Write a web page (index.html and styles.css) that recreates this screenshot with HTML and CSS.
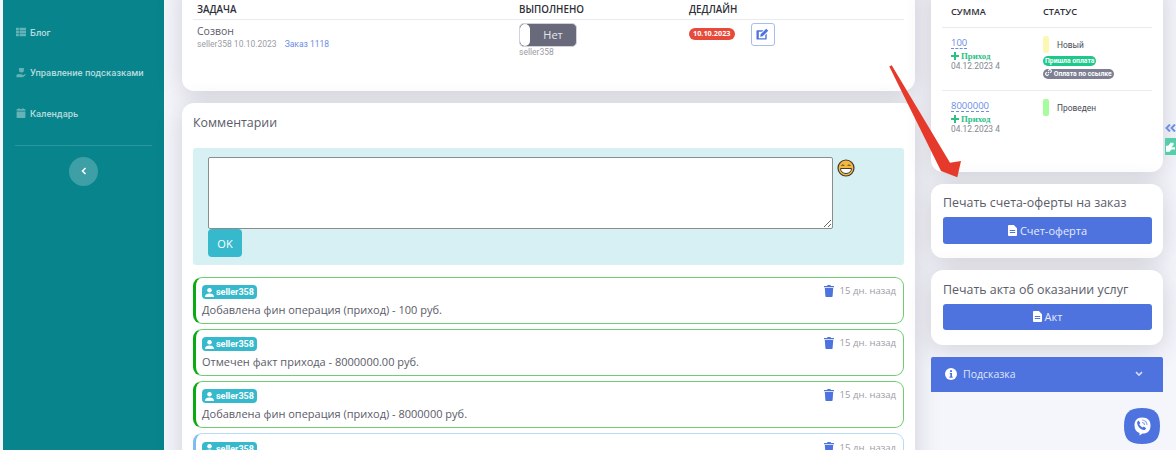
FILE: index.html
```html
<!DOCTYPE html>
<html lang="en">
<head>
    <meta charset="UTF-8">
    <meta name="viewport" content="width=device-width, initial-scale=1.0">
    <title>Заказ 1118</title>
    <link rel="stylesheet" href="styles.css">
</head>
<body>
    <div class="page">
        <aside class="sidebar">
            <a class="nav-item">
                <svg class="nav-icon" viewBox="0 0 12 12"><path d="M0 1h3.400v2.800H0zM4.200 1H12v2.800H4.200zM0 4.600h3.400v2.800H0zM4.200 4.600H12v2.800H4.200zM0 8.200h3.400V11H0zM4.200 8.200H12V11H4.200z"/></svg>
                Блог
            </a>
            <a class="nav-item">
                <svg class="nav-icon" viewBox="0 0 12 12"><path d="M3.500 0h6v2.500a3 3 0 0 1-6 0zM.5 8.500c1.500-1.500 3-1.500 4-1h2.300c1 0 1 1.300 0 1.300H5.200h2.600L10.500 7.500c.9-.4 1.500.5.8 1.100L8 11H.5z"/></svg>
                Управление подсказками
            </a>
            <a class="nav-item">
                <svg class="nav-icon" viewBox="0 0 12 12"><path d="M3 0h1.200v1.300h3.600V0H9v1.300h1.500a.8.800 0 0 1 .8.800v1.300H.7V2.100a.8.800 0 0 1 .8-.8H3zM.7 4.200h10.600v7a.8.800 0 0 1-.8.800h-9a.8.800 0 0 1-.8-.8z"/></svg>
                Календарь
            </a>
            <hr class="nav-line">
            <button class="collapse-btn">
                <svg viewBox="0 0 8 10" width="6" height="8"><path d="M6 1 2 5l4 4" fill="none" stroke="#fff" stroke-width="2"/></svg>
            </button>
        </aside>

        <main class="content">
            <section class="card task-card">
                <table class="task-table">
                    <thead>
                        <tr>
                            <th class="col-task">ЗАДАЧА</th>
                            <th class="col-done">ВЫПОЛНЕНО</th>
                            <th>ДЕДЛАЙН</th>
                        </tr>
                    </thead>
                    <tbody>
                        <tr>
                            <td>
                                <div class="task-name">Созвон</div>
                                <div class="task-meta">seller358 10.10.2023 <a class="task-link">Заказ 1118</a></div>
                            </td>
                            <td>
                                <div class="toggle"><span class="toggle-knob"></span><span class="toggle-text">Нет</span></div>
                                <div class="task-meta">seller358</div>
                            </td>
                            <td>
                                <div class="deadline">
                                    <span class="date-badge">10.10.2023</span>
                                    <button class="edit-btn">
                                        <svg viewBox="0 0 14 14" width="13" height="13"><path d="M1.500 2.500H8L6.500 4H3v7h7V7.500L11.500 6v5.500a1 1 0 0 1-1 1h-9a1 1 0 0 1-1-1v-8a1 1 0 0 1 1-1zM11 .8l2.200 2.200-6 6-2.700.5.500-2.700z" fill="#4e73df"/></svg>
                                    </button>
                                </div>
                            </td>
                        </tr>
                    </tbody>
                </table>
            </section>

            <section class="card comments-card">
                <h3 class="comments-title">Комментарии</h3>
                <div class="comment-form">
                    <div class="comment-row">
                        <textarea class="comment-input"></textarea>
                        <svg class="smile" viewBox="0 0 18 18" width="18" height="18">
                            <circle cx="9" cy="9" r="8" fill="#f6b73c" stroke="#3b3b3b" stroke-width="1.200"/>
                            <path d="M3.500 9.500h11c0 3-2.500 5-5.500 5s-5.500-2-5.500-5z" fill="#fff" stroke="#3b3b3b"/>
                            <path d="M4.500 7c.5-1.500 2-1.500 2.800 0M10.700 7c.5-1.500 2-1.500 2.800 0" fill="none" stroke="#3b3b3b"/>
                        </svg>
                    </div>
                    <button class="ok-btn">OK</button>
                </div>

                <div class="comment-list">
                    <div class="comment comment-green">
                        <div class="comment-top">
                            <span class="user-badge">
                                <svg viewBox="0 0 10 10" width="9" height="9"><circle cx="5" cy="2.600" r="2.500" fill="#fff"/><path d="M0 10c0-3 2-4 5-4s5 1 5 4z" fill="#fff"/></svg>
                                seller358
                            </span>
                            <span class="comment-age">
                                <svg class="trash" viewBox="0 0 10 12" width="10" height="12"><path d="M3.500 0h3l.4 1H10v1.300H0V1h3.100zM.8 3h8.400l-.6 8.200a.8.800 0 0 1-.8.800H2.200a.8.800 0 0 1-.8-.8z" fill="#4e73df"/></svg>
                                15 дн. назад
                            </span>
                        </div>
                        <div class="comment-text">Добавлена фин операция (приход) - 100 руб.</div>
                    </div>

                    <div class="comment comment-green">
                        <div class="comment-top">
                            <span class="user-badge">
                                <svg viewBox="0 0 10 10" width="9" height="9"><circle cx="5" cy="2.600" r="2.500" fill="#fff"/><path d="M0 10c0-3 2-4 5-4s5 1 5 4z" fill="#fff"/></svg>
                                seller358
                            </span>
                            <span class="comment-age">
                                <svg class="trash" viewBox="0 0 10 12" width="10" height="12"><path d="M3.500 0h3l.4 1H10v1.300H0V1h3.100zM.8 3h8.400l-.6 8.200a.8.800 0 0 1-.8.800H2.200a.8.800 0 0 1-.8-.8z" fill="#4e73df"/></svg>
                                15 дн. назад
                            </span>
                        </div>
                        <div class="comment-text">Отмечен факт прихода - 8000000.00 руб.</div>
                    </div>

                    <div class="comment comment-green">
                        <div class="comment-top">
                            <span class="user-badge">
                                <svg viewBox="0 0 10 10" width="9" height="9"><circle cx="5" cy="2.600" r="2.500" fill="#fff"/><path d="M0 10c0-3 2-4 5-4s5 1 5 4z" fill="#fff"/></svg>
                                seller358
                            </span>
                            <span class="comment-age">
                                <svg class="trash" viewBox="0 0 10 12" width="10" height="12"><path d="M3.500 0h3l.4 1H10v1.300H0V1h3.100zM.8 3h8.400l-.6 8.200a.8.800 0 0 1-.8.800H2.200a.8.800 0 0 1-.8-.8z" fill="#4e73df"/></svg>
                                15 дн. назад
                            </span>
                        </div>
                        <div class="comment-text">Добавлена фин операция (приход) - 8000000 руб.</div>
                    </div>

                    <div class="comment comment-blue">
                        <div class="comment-top">
                            <span class="user-badge">
                                <svg viewBox="0 0 10 10" width="9" height="9"><circle cx="5" cy="2.600" r="2.500" fill="#fff"/><path d="M0 10c0-3 2-4 5-4s5 1 5 4z" fill="#fff"/></svg>
                                seller358
                            </span>
                            <span class="comment-age">
                                <svg class="trash" viewBox="0 0 10 12" width="10" height="12"><path d="M3.500 0h3l.4 1H10v1.300H0V1h3.100zM.8 3h8.400l-.6 8.200a.8.800 0 0 1-.8.800H2.200a.8.800 0 0 1-.8-.8z" fill="#4e73df"/></svg>
                                15 дн. назад
                            </span>
                        </div>
                    </div>
                </div>
            </section>
        </main>

        <div class="right-col">
            <section class="card pay-card">
                <div class="pay-grid pay-head">
                    <div>СУММА</div>
                    <div>СТАТУС</div>
                </div>
                <div class="pay-grid pay-row">
                    <div>
                        <a class="pay-sum">100</a>
                        <div class="pay-type">
                            <svg viewBox="0 0 8 8" width="8" height="8"><path d="M3 0h2v3h3v2H5v3H3V5H0V3h3z" fill="#2cc084"/></svg>
                            Приход
                        </div>
                        <div class="pay-date">04.12.2023 4</div>
                    </div>
                    <div>
                        <div class="status"><span class="status-bar bar-yellow"></span>Новый</div>
                        <span class="pill pill-green">Пришла оплата</span>
                        <span class="pill pill-gray">
                            <svg viewBox="0 0 10 10" width="7" height="7"><path d="M6 4 4 6M4.500 2.500l1-1a2 2 0 0 1 3 3l-1 1M5.500 7.500l-1 1a2 2 0 0 1-3-3l1-1" fill="none" stroke="#fff" stroke-width="1.500"/></svg>
                            Оплата по ссылке
                        </span>
                    </div>
                </div>
                <div class="pay-grid pay-row pay-row-last">
                    <div>
                        <a class="pay-sum">8000000</a>
                        <div class="pay-type">
                            <svg viewBox="0 0 8 8" width="8" height="8"><path d="M3 0h2v3h3v2H5v3H3V5H0V3h3z" fill="#2cc084"/></svg>
                            Приход
                        </div>
                        <div class="pay-date">04.12.2023 4</div>
                    </div>
                    <div>
                        <div class="status"><span class="status-bar bar-green"></span>Проведен</div>
                    </div>
                </div>
            </section>

            <section class="card print-card">
                <h4 class="print-title">Печать счета-оферты на заказ</h4>
                <button class="print-btn">
                    <svg viewBox="0 0 10 12" width="9" height="11"><path d="M1 0h5.500L10 3.500V11a1 1 0 0 1-1 1H1a1 1 0 0 1-1-1V1a1 1 0 0 1 1-1zM2 5.500v1h6v-1zm0 2.200v1h6v-1z" fill="#fff" fill-rule="evenodd"/></svg>
                    Счет-оферта
                </button>
            </section>

            <section class="card print-card">
                <h4 class="print-title">Печать акта об оказании услуг</h4>
                <button class="print-btn">
                    <svg viewBox="0 0 10 12" width="9" height="11"><path d="M1 0h5.500L10 3.500V11a1 1 0 0 1-1 1H1a1 1 0 0 1-1-1V1a1 1 0 0 1 1-1zM2 5.500v1h6v-1zm0 2.200v1h6v-1z" fill="#fff" fill-rule="evenodd"/></svg>
                    Акт
                </button>
            </section>

            <div class="hint-bar">
                <svg viewBox="0 0 12 12" width="12" height="12"><circle cx="6" cy="6" r="6" fill="#fff"/><path d="M5 2.300h2v1.800H5zM4.700 5h2.300v3.600h.6v1.100H4.500V8.600h.8V6.100h-.6z" fill="#4e73df"/></svg>
                <span class="hint-text">Подсказка</span>
                <svg class="hint-chevron" viewBox="0 0 10 8" width="8" height="6"><path d="M1 1.500 5 5.500l4-4" fill="none" stroke="#d5dcf6" stroke-width="2"/></svg>
            </div>
        </div>

        <div class="side-tools">
            <svg viewBox="0 0 11 8" width="11" height="8"><path d="M5 .5 1.500 4 5 7.500M10 .5 6.500 4 10 7.500" fill="none" stroke="#6f8fe6" stroke-width="2"/></svg>
            <span class="tool-green">
                <svg viewBox="0 0 12 14" width="9" height="11"><path d="M0 6h3l3-4h4v3l-3 3h5v3H7l-2 3H0z" fill="#fff"/></svg>
            </span>
        </div>

        <svg class="red-arrow" viewBox="0 0 80 115" width="80" height="115">
            <path d="M5.300 1.500 7.700.3 66 97.700 77 96 73.300 112.300 57 106z" fill="#e53a2b"/>
        </svg>

        <div class="chat-btn">
            <svg viewBox="0 0 36 36" width="36" height="36">
                <path d="M18 0c13 0 18 5 18 18s-5 18-18 18S0 31 0 18 5 0 18 0z" fill="#4e73df"/>
                <path d="M18 9.500c6 0 8.500 3 8.500 8 0 5.500-3 8-7.500 8h-.5l-3 2v-2.400c-3-1-5-3.600-5-7.600 0-5 2.500-8 7.500-8z" fill="#fff"/>
                <path d="M14.500 12.500l1.800 2.500-1 1.300c.7 1.400 1.700 2.400 3.200 3.200l1.300-1 2.400 1.800-1.300 1.800c-4.200 0-7.800-3.700-7.800-8.200z" fill="#4e73df"/>
                <path d="M18 12a5 5 0 0 1 5 5M18 14.500a2.500 2.500 0 0 1 2.500 2.500" fill="none" stroke="#8fa6e8" stroke-width="1.100"/>
            </svg>
        </div>
    </div>
</body>
</html>
```

FILE: styles.css
```css
* {
    box-sizing: border-box;
}
html, body {
    margin: 0;
    height: 100%;
    overflow: hidden;
}
body {
    background-color: #f5f6fc;
    color: #5a5c69;
    font-family: "Open Sans", "Noto Sans", sans-serif;
    font-size: 11px;
}
.page {
    position: relative;
    display: flex;
    height: 450px;
    padding-left: 3px;
    overflow: hidden;
}

/* sidebar */
.sidebar {
    width: 161px;
    flex-shrink: 0;
    height: 450px;
    background-color: #07848c;
    padding: 12px 13px 0;
    color: #b5dadc;
}
.nav-item {
    display: flex;
    align-items: center;
    gap: 4px;
    height: 40.500px;
    font-family: Roboto, sans-serif;
    font-size: 9.400px;
    font-weight: 500;
    white-space: nowrap;
}
.nav-icon {
    width: 10px;
    height: 10px;
    fill: #65b2b7;
    flex-shrink: 0;
}
.nav-line {
    border: none;
    border-top: 1px solid #2b969d;
    margin: 11px -1px 0;
}
.collapse-btn {
    display: flex;
    align-items: center;
    justify-content: center;
    width: 29px;
    height: 29px;
    margin: 11px auto 0;
    border: none;
    border-radius: 50%;
    background-color: #3f9fa6;
}

/* main column */
.content {
    width: 733px;
    margin-left: 18px;
    flex-shrink: 0;
}
.card {
    background-color: #fff;
    border-radius: 12px;
    box-shadow: 0 4px 26px rgba(58, 59, 69, 0.2);
}
.task-card {
    height: 111px;
    margin-top: -20px;
    padding: 20px 11px 0;
}
.task-table {
    width: 100%;
    border-collapse: collapse;
}
.task-table th {
    height: 19px;
    padding: 0 4px;
    font-size: 9.800px;
    font-weight: 600;
    color: #2e2f38;
    text-align: left;
    border-bottom: 1px solid #e9ebf0;
}
.col-task {
    width: 322px;
}
.col-done {
    width: 170px;
}
.task-table td {
    padding: 4px 4px 0;
    vertical-align: top;
}
.task-name {
    font-size: 10.500px;
    line-height: 15px;
}
.task-meta {
    font-family: Roboto, sans-serif;
    font-size: 8.500px;
    line-height: 11px;
    color: #9b9ca5;
}
.task-link {
    margin-left: 6px;
    color: #6d8ce6;
}
.toggle {
    display: flex;
    width: 58px;
    height: 24px;
    margin-top: -1px;
    border: 1px solid #d0d2de;
    border-radius: 5px;
    background-color: #686a7c;
    overflow: hidden;
}
.toggle-knob {
    width: 10px;
    background-color: #fff;
    border-radius: 5px;
}
.toggle-text {
    flex: 1;
    text-align: center;
    color: #e6e6ea;
    font-size: 11px;
    line-height: 22px;
}
.deadline {
    display: flex;
    align-items: flex-start;
    gap: 16px;
    margin-top: -1px;
}
.date-badge {
    margin-top: 5.500px;
    padding: 0 4px;
    background-color: #e74a3b;
    border-radius: 6px;
    color: #fff;
    font-size: 7.300px;
    font-weight: 700;
    line-height: 11.500px;
}
.edit-btn {
    display: flex;
    align-items: center;
    justify-content: center;
    width: 24px;
    height: 23px;
    padding: 0;
    background-color: #fff;
    border: 1px solid #a9bcf0;
    border-radius: 3px;
}

/* comments */
.comments-card {
    height: 400px;
    margin-top: 12px;
    padding: 0 11px;
}
.comments-title {
    margin: 0;
    height: 45px;
    font-size: 12.400px;
    font-weight: 400;
    line-height: 39px;
}
.comment-form {
    background-color: #d7f0f4;
    border-radius: 3px;
    height: 117px;
    padding: 9px 15px;
}
.comment-row {
    display: flex;
    gap: 4px;
}
.comment-input {
    display: block;
    width: 625px;
    height: 72px;
    border: 1px solid #8c8c8c;
    border-radius: 2px;
    background-color: #fff;
    margin: 0;
}
.smile {
    margin-top: 2px;
}
.ok-btn {
    display: block;
    width: 34px;
    height: 28px;
    margin-top: 0;
    border: none;
    border-radius: 4px;
    background-color: #36b9cc;
    color: #fff;
    font-family: inherit;
    font-size: 11px;
}
.comment-list {
    display: flex;
    flex-direction: column;
    gap: 5.200px;
    margin-top: 11.500px;
}
.comment {
    height: 47px;
    flex-shrink: 0;
    padding: 7.500px 6px;
    border: 1px solid #6fce73;
    border-left: 3px solid #0aab12;
    border-radius: 9px;
}
.comment-blue {
    border-color: #b7dcf7;
    border-left-color: #7fbdf0;
}
.comment-top {
    display: flex;
    justify-content: space-between;
    align-items: flex-start;
}
.user-badge {
    display: inline-flex;
    align-items: center;
    gap: 2px;
    height: 14px;
    padding: 0 3px;
    background-color: #36b9cc;
    border-radius: 4px;
    color: #fff;
    font-family: Roboto, sans-serif;
    font-size: 9px;
    font-weight: 700;
}
.comment-age {
    display: flex;
    align-items: center;
    gap: 6px;
    margin-right: 1px;
    color: #9b9ca5;
    font-size: 9.500px;
    line-height: 12px;
}
.comment-text {
    margin-top: 2px;
    font-size: 11px;
    line-height: 17px;
}

/* right column */
.right-col {
    width: 232px;
    margin-left: 16px;
    flex-shrink: 0;
}
.pay-card {
    height: 191.500px;
    margin-top: -20px;
    padding: 20px 11px 0;
}
.pay-grid {
    display: grid;
    grid-template-columns: 92px 1fr;
}
.pay-head {
    height: 28px;
    padding: 4.500px 9px 0;
    font-size: 9.200px;
    font-weight: 600;
    color: #2e2f38;
    border-bottom: 1px solid #e9ebf0;
}
.pay-row {
    height: 63px;
    padding: 8px 9px 0;
    border-bottom: 1px solid #e9ebf0;
}
.pay-row-last {
    border-bottom: none;
}
.pay-sum {
    display: inline-block;
    margin-top: 1px;
    color: #6d8ce6;
    font-size: 9.500px;
    line-height: 11px;
    border-bottom: 1px dashed #6d8ce6;
    vertical-align: top;
}
.pay-type {
    display: flex;
    align-items: center;
    gap: 2px;
    color: #2cc084;
    font-family: "Liberation Serif", serif;
    font-size: 8.800px;
    font-weight: 700;
    line-height: 10px;
}
.pay-date {
    color: #85868f;
    font-family: Roboto, sans-serif;
    font-size: 8.400px;
    line-height: 10px;
}
.status {
    display: flex;
    align-items: center;
    gap: 8px;
    height: 17px;
    font-family: Roboto, sans-serif;
    font-size: 8.400px;
    color: #4a4b55;
}
.status-bar {
    width: 6px;
    height: 17px;
    border-radius: 2px;
}
.bar-yellow {
    background-color: #fdf7b4;
}
.bar-green {
    background-color: #a6fd9c;
}
.pill {
    display: table;
    margin-top: 2.500px;
    padding: 0 2px;
    border-radius: 5px;
    color: #fff;
    font-family: Roboto, sans-serif;
    font-size: 6.800px;
    font-weight: 700;
    line-height: 10px;
}
.pill-green {
    background-color: #1cc88a;
}
.pill-gray {
    margin-top: 3.500px;
    background-color: #7e7f92;
}
.print-card {
    height: 74.500px;
    margin-top: 12px;
    padding: 11.500px 11px 0 12px;
}
.print-title {
    margin: 0 0 6px;
    font-size: 12.400px;
    font-weight: 400;
    line-height: 16px;
}
.print-btn {
    display: flex;
    align-items: center;
    justify-content: center;
    gap: 3px;
    width: 100%;
    height: 26.500px;
    border: none;
    border-radius: 3px;
    background-color: #4e73df;
    color: #e6ebfa;
    font-family: inherit;
    font-size: 11px;
}
.hint-bar {
    display: flex;
    align-items: center;
    height: 34.500px;
    margin-top: 12.500px;
    padding: 0 14px;
    background-color: #4e73df;
    border-radius: 2px 2px 0 0;
    color: #dfe5f9;
    font-size: 10.500px;
}
.hint-text {
    margin-left: 6px;
    flex: 1;
}
.hint-chevron {
    margin-right: 6px;
}

/* things lying over the page */
.side-tools {
    position: absolute;
    left: 1165px;
    top: 124px;
    display: flex;
    flex-direction: column;
    gap: 6px;
}
.tool-green {
    display: flex;
    align-items: center;
    justify-content: center;
    width: 11px;
    height: 17px;
    background-color: #55ceaa;
}
.red-arrow {
    position: absolute;
    left: 884px;
    top: 65px;
}
.chat-btn {
    position: absolute;
    left: 1124px;
    top: 408px;
}
```
